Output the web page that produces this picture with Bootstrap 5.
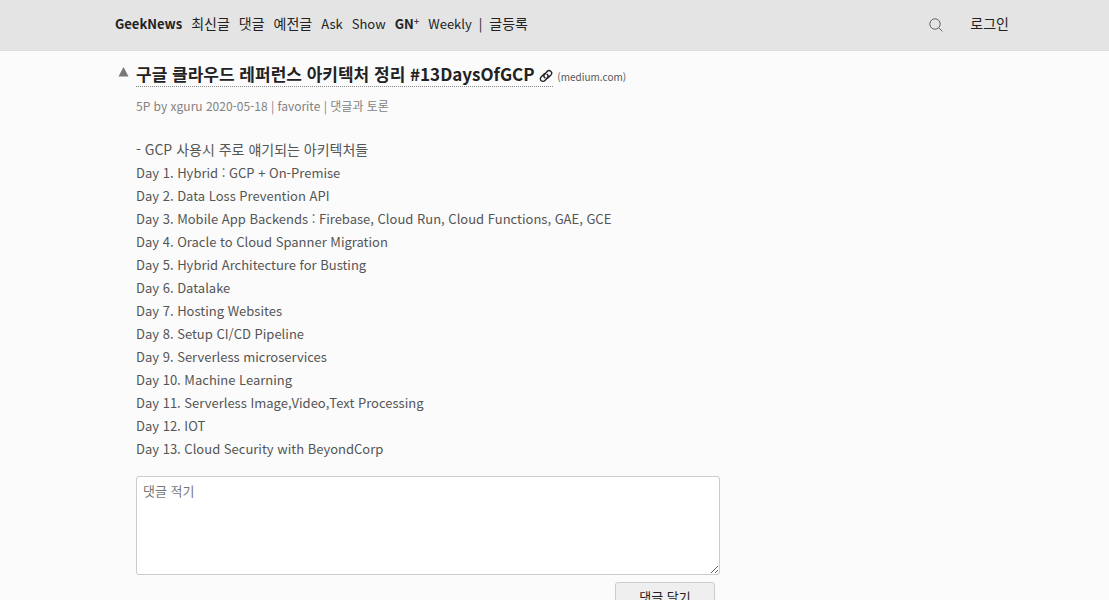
<!DOCTYPE html>
<html lang="ko">
<head>
<meta charset="utf-8">
<meta name="viewport" content="width=device-width, initial-scale=1">
<title>구글 클라우드 레퍼런스 아키텍처 정리 #13DaysOfGCP | GeekNews</title>
<link rel="stylesheet" href="https://cdn.jsdelivr.net/npm/bootstrap@5.3.0/dist/css/bootstrap.min.css">
<style>
body { background: #fbfbfb; color: #555; font-family: "Noto Sans CJK KR", sans-serif; font-size: 13px; line-height: 23px; }
a { color: inherit; text-decoration: none; }
.ko { font-size: 14px; }
.wrap { max-width: 909px; padding-left: 15px; }
.topbar { background: #e4e4e4; color: #222; height: 51px; padding-bottom: 4px; border-bottom: 1px solid #dfdfdf; }
.topbar nav { column-gap: 9px; }
.topbar .submit-group { column-gap: 7px; }
.topbar sup { font-size: 10px; font-weight: 400; top: -4px; }
.account { column-gap: 27px; }
.search-icon { color: #666; }
.topic { padding-top: 12px; padding-left: 3px; }
.vote { width: 18px; height: 18px; color: #777; }
.topic-title { font-size: 17px; line-height: 22px; color: #222; padding-bottom: 1px; border-bottom: 1px dotted #888; }
.site { font-size: 10px; color: #555; }
.meta { font-size: 12px; line-height: 18px; color: #828282; margin-top: 9px; }
.summary { margin-top: 23px; }
.comment-form { max-width: 584px; margin-top: 16px; }
.comment-form textarea { height: 99px; padding: 2px 6px; font-size: 13px; line-height: 23px; border-color: #ccc; border-radius: 3px; }
.comment-form textarea::placeholder { color: #777; }
.send { width: 100px; height: 30px; padding: 0; line-height: 24px; color: #222; background: #efefef; border: 1px solid #ccc; border-radius: 3px; margin: 7px 5px 20px 0; }
</style>
</head>
<body>
<header class="topbar d-flex">
  <div class="wrap container-fluid pe-0 d-flex align-items-center justify-content-between">
    <nav class="d-flex flex-wrap align-items-center" aria-label="주 메뉴">
      <a href="#" class="fw-bold">GeekNews</a>
      <a href="#" class="ko">최신글</a>
      <a href="#" class="ko">댓글</a>
      <a href="#" class="ko">예전글</a>
      <a href="#">Ask</a>
      <a href="#">Show</a>
      <a href="#" class="fw-bold">GN<sup>+</sup></a>
      <span class="submit-group d-flex"><a href="#">Weekly</a><span>|</span><a href="#" class="ko">글등록</a></span>
    </nav>
    <div class="account d-flex align-items-center">
      <a href="#" class="search-icon d-flex mt-1" aria-label="검색">
        <svg width="14" height="14" viewBox="0 0 14 14" fill="none" stroke="currentColor"><circle cx="6" cy="6" r="5.2"/><path d="M9.7 9.7 13.4 13.4"/></svg>
      </a>
      <a href="#" class="ko">로그인</a>
    </div>
  </div>
</header>
<main class="wrap container-fluid pe-0">
  <article class="topic d-flex align-items-start">
    <a href="#" class="vote flex-shrink-0" aria-label="추천">
      <svg class="d-block mt-1" width="11" height="10" viewBox="0 0 11 10" fill="currentColor"><path d="M5.5 0 10.5 9.5H.5Z"/></svg>
    </a>
    <div class="flex-grow-1">
      <div class="d-flex flex-wrap align-items-baseline gap-1">
        <h1 class="topic-title fw-bold m-0"><a href="#">구글 클라우드 레퍼런스 아키텍처 정리 #13DaysOfGCP
          <svg width="14" height="14" viewBox="0 0 14 14" fill="none" stroke="currentColor" stroke-width="1.4" stroke-linecap="round"><path d="M5.9 8.8A2.6 2.6 0 0 1 5.5 5.2L8.1 2.5A2.4 2.4 0 0 1 12 5.9L9.3 8.6A2.4 2.4 0 0 1 7.9 9.3"/><path d="M8.1 5.2A2.6 2.6 0 0 1 8.5 8.8L5.9 11.5A2.4 2.4 0 0 1 2 8.1L4.7 5.4A2.4 2.4 0 0 1 6.1 4.7"/></svg></a></h1>
        <span class="site">(medium.com)</span>
      </div>
      <div class="meta">5P by <a href="#">xguru</a> 2020-05-18 | <a href="#">favorite</a> | <a href="#">댓글과 토론</a></div>
      <div class="summary">
        <p class="ko m-0">- GCP 사용시 주로 얘기되는 아키텍처들</p>
        Day 1. Hybrid : GCP + On-Premise<br>
        Day 2. Data Loss Prevention API<br>
        Day 3. Mobile App Backends : Firebase, Cloud Run, Cloud Functions, GAE, GCE<br>
        Day 4. Oracle to Cloud Spanner Migration<br>
        Day 5. Hybrid Architecture for Busting<br>
        Day 6. Datalake<br>
        Day 7. Hosting Websites<br>
        Day 8. Setup CI/CD Pipeline<br>
        Day 9. Serverless microservices<br>
        Day 10. Machine Learning<br>
        Day 11. Serverless Image,Video,Text Processing<br>
        Day 12. IOT<br>
        Day 13. Cloud Security with BeyondCorp
      </div>
      <form class="comment-form d-flex flex-column">
        <textarea class="form-control" placeholder="댓글 적기" aria-label="댓글 적기"></textarea>
        <button type="button" class="send align-self-end">댓글 달기</button>
      </form>
    </div>
  </article>
</main>
<script src="https://cdn.jsdelivr.net/npm/bootstrap@5.3.0/dist/js/bootstrap.bundle.min.js"></script>
</body>
</html>
